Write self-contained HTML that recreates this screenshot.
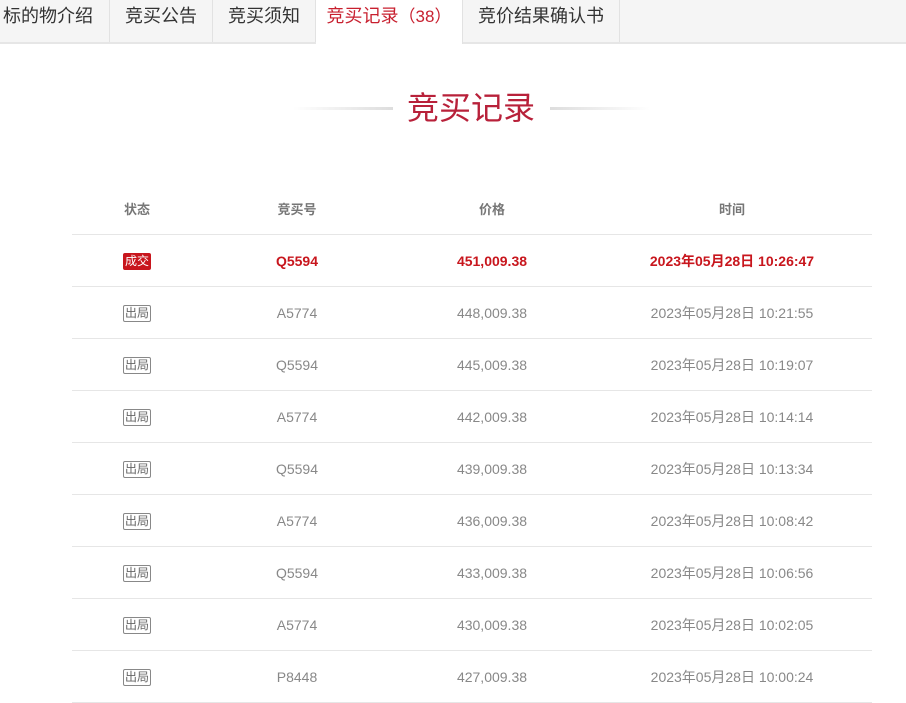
<!DOCTYPE html>
<html><head><meta charset="utf-8"><style>
body{margin:0;width:906px;height:702px;overflow:hidden;background:#fff;font-family:"Liberation Sans","Noto Sans CJK SC",sans-serif;}
.tabs{position:absolute;left:0;top:0;width:906px;height:42px;background:#f5f5f5;border-bottom:2px solid #e6e6e6;}
.tab{position:absolute;top:0;height:42px;line-height:32px;font-size:18px;color:#333;text-align:center;border-right:1px solid #e2e2e2;}
.tab.on{background:#fff;color:#c8202f;height:44px;}
.title{position:absolute;top:86px;left:0;width:942px;text-align:center;font-size:32px;color:#b8213a;line-height:44px;}
.ln{position:absolute;top:107px;height:3px;width:100px;}
table{position:absolute;left:72px;top:183px;width:800px;border-collapse:collapse;}
td{height:51px;border-bottom:1px solid #e6e6e6;text-align:center;font-size:14px;color:#888;padding:0;}
tr.h td{height:51px;font-weight:bold;font-size:13px;color:#777;}
tr.win td{color:#c8161d;font-weight:bold;}
.b{display:inline-block;font-size:12px;line-height:15px;padding:0 1px;border:1px solid #888;border-radius:2px;color:#666;font-weight:normal;}
.r{background:#c8161d;color:#fff;border-color:#c8161d;}
</style></head><body>
<div class="tabs">
<div class="tab" style="left:0;width:106px;padding-left:3px;text-align:left;">标的物介绍</div>
<div class="tab" style="left:110px;width:102px;">竞买公告</div>
<div class="tab" style="left:213px;width:102px;">竞买须知</div>
<div class="tab on" style="left:316px;width:146px;">竞买记录<span style="font-size:17px">（38）</span></div>
<div class="tab" style="left:463px;width:156px;">竞价结果确认书</div>
</div>
<div class="ln" style="left:293px;background:linear-gradient(90deg,#fff,#ddd);"></div>
<div class="ln" style="left:550px;background:linear-gradient(90deg,#ddd,#fff);"></div>
<div class="title" style="width:942px;">竞买记录</div>
<table>
<colgroup><col style="width:130px"><col style="width:190px"><col style="width:200px"><col style="width:280px"></colgroup>
<tr class="h"><td>状态</td><td>竞买号</td><td>价格</td><td>时间</td></tr>
<tr class="win"><td><span class="b r">成交</span></td><td>Q5594</td><td>451,009.38</td><td>2023年05月28日 10:26:47</td></tr>
<tr><td><span class="b">出局</span></td><td>A5774</td><td>448,009.38</td><td>2023年05月28日 10:21:55</td></tr>
<tr><td><span class="b">出局</span></td><td>Q5594</td><td>445,009.38</td><td>2023年05月28日 10:19:07</td></tr>
<tr><td><span class="b">出局</span></td><td>A5774</td><td>442,009.38</td><td>2023年05月28日 10:14:14</td></tr>
<tr><td><span class="b">出局</span></td><td>Q5594</td><td>439,009.38</td><td>2023年05月28日 10:13:34</td></tr>
<tr><td><span class="b">出局</span></td><td>A5774</td><td>436,009.38</td><td>2023年05月28日 10:08:42</td></tr>
<tr><td><span class="b">出局</span></td><td>Q5594</td><td>433,009.38</td><td>2023年05月28日 10:06:56</td></tr>
<tr><td><span class="b">出局</span></td><td>A5774</td><td>430,009.38</td><td>2023年05月28日 10:02:05</td></tr>
<tr><td><span class="b">出局</span></td><td>P8448</td><td>427,009.38</td><td>2023年05月28日 10:00:24</td></tr>
</table>
</body></html>
